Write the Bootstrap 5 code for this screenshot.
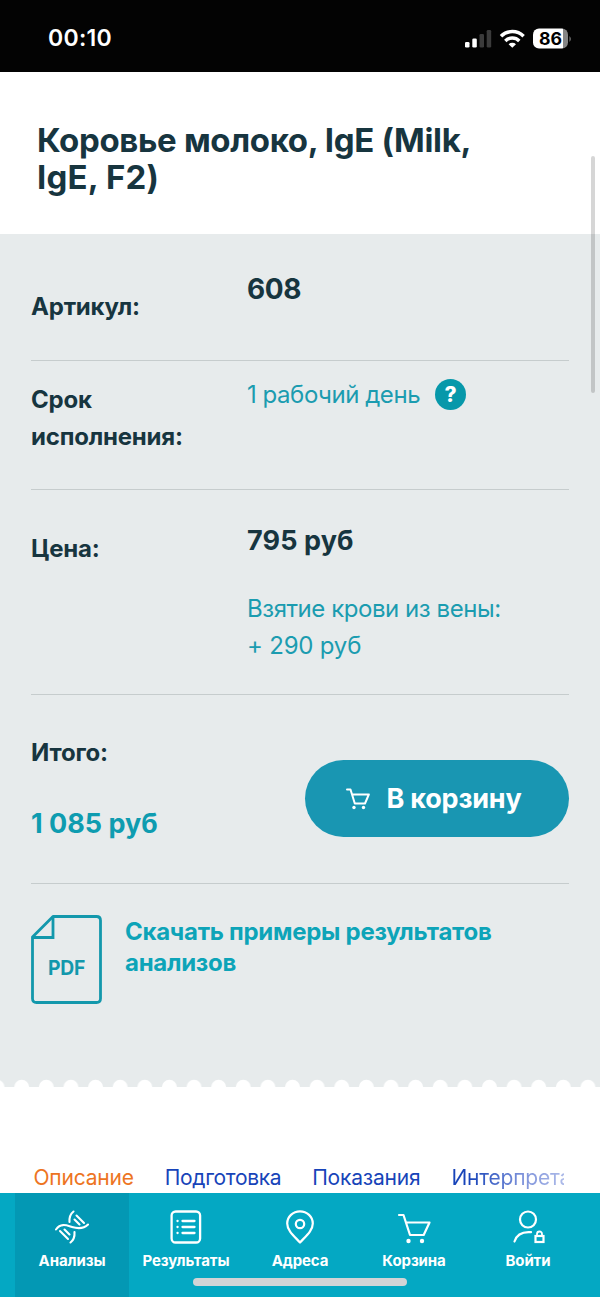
<!DOCTYPE html>
<html lang="ru">
<head>
<meta charset="utf-8">
<meta name="viewport" content="width=device-width, initial-scale=1">
<title>Коровье молоко, IgE</title>
<link href="https://cdn.jsdelivr.net/npm/bootstrap@5.3.0/dist/css/bootstrap.min.css" rel="stylesheet">
<style>
body{width:600px;height:1297px;overflow:hidden;font-family:Inter,Roboto,sans-serif;color:#17353f;background:#fff}
.status{height:72px;background:#030303;color:#fff;padding:4px 28px 0 48px}
.clock{font-size:23px;font-weight:600;letter-spacing:.3px}
.heading{height:162px;padding:50px 100px 0 37px}
.heading h1{font-size:33px;line-height:37px;font-weight:700;letter-spacing:-.35px;margin:0}
.panel{height:853px;padding:0 31px;background:#e7ebec}
.line{border-bottom:1.5px solid #c6cccd}
.name{width:215px;flex:none;font-size:24px;line-height:37px;font-weight:700;letter-spacing:-.2px}
.value{font-size:27px;line-height:40px;font-weight:700;padding-left:1px;letter-spacing:.1px}
.info{font-size:24px;line-height:37px;color:#1b9cb0;letter-spacing:-.45px;padding-left:1px}
.r1{height:127px}.r1 .name{padding-top:54px}.r1 .value{padding-top:35px;font-size:28px;letter-spacing:-.4px}
.r2{height:129px}.r2 .name{padding-top:20px}.r2 .info{padding-top:15px}
.r3{height:205px}.r3 .name{padding-top:40px}.r3 .value{padding-top:31px}.r3 .info{margin-top:29px}
.r4{height:189px}.r4 .name{padding-top:39px}
.total{font-size:27px;line-height:40px;font-weight:700;color:#0e9cb0;margin-top:33px}
.help{width:31px;height:31px;background:#0798aa;color:#fff;font-size:21px;font-weight:800;margin-left:15px;letter-spacing:0}
.buy{width:264px;height:77px;margin-top:65px;background:#1996b2;color:#fff!important;font-size:27px;font-weight:700;border:0;letter-spacing:-.2px;gap:16px;padding:1px 6px 0 0}
.buy:hover{background:#1488a2}
.pdf{color:#0da4b8;font-size:24px;line-height:31px;font-weight:700;letter-spacing:-.28px;padding-top:31px;gap:23px}
.pdf div{padding-top:.6px}
.scallop{left:0;right:0;bottom:0;height:8px}
.tabs{height:106px;padding:76px 0 0 33.5px;width:564px;gap:31px;font-size:21px;line-height:30px;color:#1744b9;letter-spacing:-.2px;white-space:nowrap;overflow:hidden}
.fade-tab{background:linear-gradient(90deg,#1744b9 15%,#7e93db 60%,#b5c1eb 100%);background-clip:text;-webkit-background-clip:text;color:transparent;flex:none}
.bottom{height:104px;background:#04a8c3;padding:0 15px}
.bottom a{width:114px;padding-top:17px;color:#fff;text-decoration:none;font-size:15px;line-height:20px;font-weight:700;letter-spacing:-.1px}
.bottom a.on{background:#0398b4}
.bottom svg{display:block;margin:0 auto 7px}
.homebar{left:193px;width:214px;height:8px;bottom:11px;background:#d2d4d6}
.scrollbar-thumb{left:591px;top:156px;width:4px;height:237px;background:rgba(0,0,0,.16)}
svg text{font-family:Inter,sans-serif;font-weight:700}
</style>
</head>
<body class="position-relative d-flex flex-column">
<header class="status d-flex align-items-center justify-content-between">
  <span class="clock">00:10</span>
  <svg width="108" height="24" viewBox="0 0 108 24" fill="#fff">
    <rect x="1" y="16" width="4.500" height="5.500" rx="1.300"/><rect x="8.300" y="12.500" width="4.500" height="9" rx="1.300"/>
    <g fill="#3b3b3b"><rect x="15.500" y="8" width="4.500" height="13.500" rx="1.300"/><rect x="22.700" y="4" width="4.500" height="17.500" rx="1.300"/></g>
    <g fill="none" stroke="#fff" stroke-width="3.500"><path d="M37 10.200a16 16 0 0 1 22.600 0M41.300 14.900a10 10 0 0 1 14 0"/></g>
    <path d="M44.600 18.200a5.400 5.400 0 0 1 7.400 0l-3.700 3.600z"/>
    <clipPath id="bat"><rect x="69" y="2.500" width="35" height="20" rx="6"/></clipPath>
    <g clip-path="url(#bat)"><path d="M69 2h30v21H69z"/><path d="M99 2h5v21h-5z" fill="#858585"/></g>
    <path d="M105.500 10v6q2.500-3 0-6z" fill="#858585"/>
    <text x="75" y="18.800" font-size="17" textLength="23" lengthAdjust="spacingAndGlyphs" fill="#000">86</text>
  </svg>
</header>
<section class="heading"><h1>Коровье молоко, IgE (Milk,<br><span style="letter-spacing:.2px">IgE, F2)</span></h1></section>
<main class="panel position-relative">
  <div class="r1 line d-flex"><div class="name">Артикул:</div><div class="value">608</div></div>
  <div class="r2 line d-flex"><div class="name">Срок<br>исполнения:</div>
    <div class="info d-flex align-items-center align-self-start">1 рабочий день<span class="help rounded-circle d-flex align-items-center justify-content-center">?</span></div></div>
  <div class="r3 line d-flex"><div class="name">Цена:</div>
    <div><div class="value">795 руб</div><div class="info">Взятие крови из вены:<br><span style="letter-spacing:-.2px">+ 290 руб</span></div></div></div>
  <div class="r4 line d-flex justify-content-between">
    <div><div class="name">Итого:</div><div class="total">1 085 руб</div></div>
    <button class="buy btn rounded-pill d-flex align-items-center justify-content-center">
      <svg width="24" height="22" viewBox="0 0 24 22" fill="none" stroke="#fff" stroke-width="2" stroke-linejoin="round" stroke-linecap="round"><path d="M1 1.500h3.500l4.300 14H19l3.800-9H6"/><g fill="#fff" stroke="none"><circle cx="8" cy="19.500" r="1.700"/><circle cx="17.500" cy="19.500" r="1.700"/></g></svg>
      В корзину</button>
  </div>
  <div class="pdf d-flex">
    <svg class="flex-shrink-0" width="71" height="90" viewBox="0 0 71 90" fill="none" stroke="#1398ac" stroke-width="2.800"><path d="M22 1.500h43.500q4 0 4 4v78q0 4-4 4h-60q-4 0-4-4V22z" stroke-linejoin="round"/><path d="M22 1.500v21H1.500"/><text x="17" y="60" font-size="20" textLength="37" lengthAdjust="spacingAndGlyphs" stroke="none" fill="#1398ac">PDF</text></svg>
    <div>Скачать примеры результатов<br>анализов</div>
  </div>
  <svg class="scallop position-absolute" width="600" height="8"><defs><pattern id="dots" x="9.400" y="0" width="24.620" height="8" patternUnits="userSpaceOnUse"><circle cx="12.300" cy="8.300" r="7.500" fill="#fff"/></pattern></defs><rect width="600" height="8" fill="url(#dots)"/></svg>
</main>
<nav class="tabs d-flex"><span style="color:#ed7422">Описание</span><span style="letter-spacing:-.35px">Подготовка</span><span>Показания</span><span class="fade-tab">Интерпрета</span></nav>
<nav class="bottom d-flex text-center position-relative">
  <a class="on" href="#"><svg width="34" height="34" viewBox="0 0 34 34" fill="none" stroke="#fff" stroke-width="2.100" stroke-linecap="round"><path d="M1 19.500C6 12.500 12 15.500 17 17s11 2.500 16-2.500"/><path d="M14.500 12Q14 5 18.500 1.500M19.500 22Q20 29 15.500 32.500M21.500 5.500l7.500 7.500M19.500 9.500l5 5M5 21l8 8M9.500 19.500l5 5"/></svg>Анализы</a>
  <a href="#"><svg width="34" height="34" viewBox="0 0 34 34" fill="none" stroke="#fff" stroke-width="2.300" stroke-linecap="round"><rect x="2.600" y="1.500" width="28.500" height="31" rx="4"/><path d="M13.500 11h12M13.500 17h12M13.500 23h12M8.500 11h.1M8.500 17h.1M8.500 23h.1"/></svg>Результаты</a>
  <a href="#"><svg width="34" height="34" viewBox="0 0 34 34" fill="none" stroke="#fff" stroke-width="2.200" stroke-linejoin="round"><path d="M17 32.500C11 26 4.200 20.500 4.200 13.500a12.800 12.200 0 0 1 25.600 0C29.800 20.500 23 26 17 32.500z"/><circle cx="17" cy="14" r="4.200"/></svg>Адреса</a>
  <a href="#"><svg width="34" height="34" viewBox="0 0 34 34" fill="none" stroke="#fff" stroke-width="2.200" stroke-linejoin="round" stroke-linecap="round"><path d="M2 5h4.500l6.500 20h13.700l5.800-12.500H9.200"/><g fill="#fff" stroke="none"><circle cx="11.500" cy="31" r="2.200"/><circle cx="25" cy="31" r="2.200"/></g></svg>Корзина</a>
  <a href="#"><svg width="34" height="34" viewBox="0 0 34 34" fill="none" stroke="#fff" stroke-width="2.200" stroke-linecap="round"><circle cx="17" cy="9.500" r="8"/><path d="M3.500 31.500C5.500 25 11.500 21.500 20 22.200"/><rect x="24.500" y="26" width="8" height="6"/><path d="M26 25.500v-1.500a2.500 2.500 0 0 1 5 0v1.500" stroke-width="1.800"/></svg>Войти</a>
  <span class="homebar position-absolute rounded-pill"></span>
</nav>
<div class="scrollbar-thumb position-absolute rounded-pill"></div>
<script src="https://cdn.jsdelivr.net/npm/bootstrap@5.3.0/dist/js/bootstrap.bundle.min.js"></script>
</body>
</html>
